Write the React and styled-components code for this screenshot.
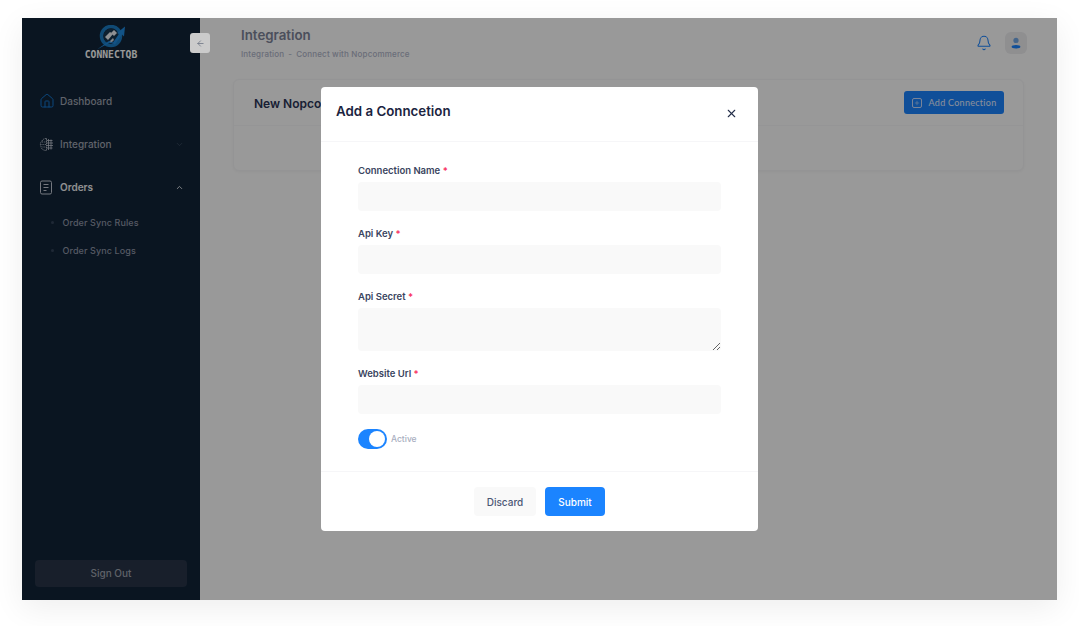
import React from 'react';
import styled, { createGlobalStyle } from 'styled-components';
import { ArrowLeft, Bell, ChevronDown, ChevronUp, Home, Plus, X } from 'lucide-react';

const GlobalStyle = createGlobalStyle`
  html, body {
    margin: 0;
    padding: 0;
    background: #fff;
    font-family: Inter, "Liberation Sans", sans-serif;
  }
  * { box-sizing: border-box; }
`;

const Page = styled.div`
  width: 1079px;
  height: 626px;
  padding: 18px 22px 26px;
`;

const Window = styled.div`
  position: relative;
  display: flex;
  height: 582px;
  background: #fff;
  box-shadow: 0 8px 30px rgba(0, 0, 0, 0.07);
`;

const Sidebar = styled.aside`
  width: 178px;
  flex-shrink: 0;
  display: flex;
  flex-direction: column;
  background: #112438;
  padding: 0 13px 13px;
`;

const Brand = styled.div`
  height: 46px;
  padding-top: 7px;
  display: flex;
  flex-direction: column;
  align-items: center;
  margin-bottom: 27px;
`;

const BrandName = styled.div`
  font-family: "DejaVu Sans Mono", monospace;
  font-size: 9.7px;
  font-weight: 700;
  color: #fff;
  line-height: 10px;
`;

const CollapseButton = styled.button`
  position: absolute;
  z-index: 3;
  left: 168px;
  top: 15px;
  width: 20px;
  height: 20px;
  padding: 0;
  border: 0;
  border-radius: 3px;
  background: #cbcbcb;
  color: #687080;
  display: flex;
  align-items: center;
  justify-content: center;
`;

const NavItem = styled.div`
  display: flex;
  align-items: center;
  height: 20px;
  margin-bottom: ${(p) => p.$gap}px;
  padding-left: 4px;
  font-size: 10px;
  font-weight: ${(p) => (p.$open ? 600 : 500)};
  color: ${(p) => (p.$open ? '#f0f0f2' : '#a0a5b2')};
`;

const NavIcon = styled.span`
  width: 21px;
  display: flex;
  align-items: center;
  color: ${(p) => p.$color};
`;

const NavCaret = styled.span`
  margin-left: auto;
  margin-right: 3px;
  display: flex;
  color: ${(p) => p.$color};
`;

const SubList = styled.div`
  display: flex;
  flex-direction: column;
  gap: 8px;
  margin-top: -5px;
`;

const SubItem = styled.div`
  display: flex;
  align-items: center;
  height: 20px;
  padding-left: 16px;
  font-size: 9px;
  font-weight: 500;
  letter-spacing: 0.1px;
  color: #8f95a6;

  &::before {
    content: '';
    width: 3px;
    height: 3px;
    border-radius: 50%;
    background: #34445a;
    margin-right: 8.5px;
  }
`;

const SignOut = styled.button`
  margin-top: auto;
  height: 27px;
  padding-bottom: 2px;
  border: 0;
  border-radius: 4px;
  background: #283448;
  color: #9ea3ae;
  font-family: inherit;
  font-size: 10px;
  font-weight: 500;
`;

const Main = styled.main`
  flex: 1;
  display: flex;
  flex-direction: column;
  padding: 0 33px;
`;

const TopBar = styled.header`
  height: 61px;
  padding: 9px 8px 0;
  display: flex;
  justify-content: space-between;
`;

const Title = styled.h1`
  margin: 0;
  font-size: 13.3px;
  line-height: 17px;
  font-weight: 600;
  color: #7d8499;
`;

const Breadcrumb = styled.div`
  margin-top: 5px;
  display: flex;
  align-items: center;
  gap: 4px;
  font-size: 8px;
  font-weight: 500;
  letter-spacing: 0.18px;
  color: #b0b6ca;
`;

const TopActions = styled.div`
  display: flex;
  align-items: center;
  height: 32px;
  gap: 13px;
  margin-right: -11px;
`;

const Avatar = styled.div`
  width: 22px;
  height: 22px;
  border-radius: 6px;
  background: #eeeef1;
  display: flex;
  align-items: center;
  justify-content: center;
`;

const Card = styled.section`
  height: 92px;
  border: 1px solid #f7f7f9;
  border-radius: 6px;
  background: #fff;
  box-shadow: 0 1px 3px rgba(0, 0, 0, 0.04);
`;

const CardHead = styled.div`
  height: 46px;
  padding: 11px 19px 0 20px;
  display: flex;
  justify-content: space-between;
  align-items: flex-start;
  border-bottom: 1px solid #f9f9fa;
`;

const CardTitle = styled.div`
  font-size: 12px;
  font-weight: 600;
  color: #2b3558;
  line-height: 25px;
`;

const AddButton = styled.button`
  height: 23px;
  width: 100px;
  border: 0;
  border-radius: 3px;
  background: #1b84ff;
  color: #e8f0ff;
  display: flex;
  align-items: center;
  justify-content: center;
  gap: 7px;
  font-family: Lato, sans-serif;
  font-size: 9px;
  font-weight: 400;
  letter-spacing: 0.28px;
`;

const PlusBox = styled.span`
  width: 10px;
  height: 10px;
  border: 1px solid #c9ddff;
  border-radius: 2px;
  display: flex;
  align-items: center;
  justify-content: center;
`;

const Overlay = styled.div`
  position: absolute;
  inset: 0;
  z-index: 2;
  background: rgba(0, 0, 0, 0.4);
  display: flex;
  align-items: center;
  justify-content: center;
`;

const Modal = styled.div`
  width: 437px;
  height: 444px;
  background: #fff;
  border-radius: 4px;
  display: flex;
  flex-direction: column;
`;

const ModalHead = styled.div`
  height: 55px;
  flex-shrink: 0;
  padding: 16px 20px 0 15px;
  display: flex;
  justify-content: space-between;
  align-items: flex-start;
  border-bottom: 1px solid #f6f6f8;
`;

const ModalTitle = styled.h2`
  margin: 0;
  font-size: 13.3px;
  font-weight: 600;
  line-height: 17px;
  color: #1b2440;
`;

const CloseIcon = styled.span`
  display: flex;
  margin-top: 4px;
  color: #252f4a;
`;

const Form = styled.form`
  flex: 1;
  padding: 21px 37px 0;
  display: flex;
  flex-direction: column;
`;

const Label = styled.label`
  display: block;
  font-size: 9.5px;
  font-weight: 600;
  line-height: 14px;
  padding-top: 1px;
  height: 15px;
  margin-bottom: 4px;
  color: #3a4460;

  &::after {
    content: ' *';
    color: #f8285a;
  }
`;

const Input = styled.div`
  height: 29px;
  border-radius: 4px;
  background: #f9f9f9;
  margin-bottom: 15px;
`;

const TextArea = styled.textarea`
  display: block;
  width: 100%;
  height: 43px;
  border: 0;
  outline: 0;
  border-radius: 4px;
  background: #f9f9f9;
  margin-bottom: 15px;
`;

const SwitchRow = styled.div`
  display: flex;
  align-items: center;
  gap: 4px;
  font-size: 8.5px;
  font-weight: 500;
  color: #a8aec0;
`;

const Switch = styled.span`
  width: 29px;
  height: 20px;
  border-radius: 10px;
  background: #1b84ff;
  display: flex;
  align-items: center;
  justify-content: flex-end;
  padding-right: 2px;

  &::after {
    content: '';
    width: 16px;
    height: 16px;
    border-radius: 50%;
    background: #fff;
  }
`;

const ModalFoot = styled.div`
  height: 60px;
  flex-shrink: 0;
  border-top: 1px solid #f6f6f8;
  display: flex;
  align-items: center;
  justify-content: center;
  gap: 9px;
`;

const FootButton = styled.button`
  height: 29px;
  width: ${(p) => p.$w}px;
  border: 0;
  border-radius: 4px;
  font-family: inherit;
  font-size: 10px;
  font-weight: 500;
  background: ${(p) => (p.$primary ? '#1b84ff' : '#f9f9f9')};
  color: ${(p) => (p.$primary ? '#fff' : '#4b5675')};
`;

function LogoMark() {
  return (
    <svg width="32" height="25" viewBox="0 0 32 25">
      <circle cx="16" cy="11" r="9.5" fill="none" stroke="#1b7cc4" strokeWidth="3.5" />
      <circle cx="16" cy="11" r="7.5" fill="#17354f" />
      <path d="M10 12l5-5 3 2-5 6z" fill="#eef1f5" />
      <path d="M16 8l3-3 3 3-3 3z" fill="#eef1f5" />
      <path d="M14 17l4-4 1 2-3 3z" fill="#cdd4de" />
      <path d="M2 24.5L14 16l4 1.5 6-8.5-2-1 8-6.5-1 10-2-2-7 10-5-2z" fill="#1f8ae0" />
    </svg>
  );
}

function CircuitIcon() {
  return (
    <svg width="15" height="15" viewBox="0 0 15 15" fill="none" stroke="#c4c9d4" strokeWidth="0.8">
      <path d="M7.5 1.5C5 1.5 3.500 2.500 3 4 1.500 5 .8 7.500 2 9.500c0 2.500 2.500 4 5.500 4z" strokeDasharray="1.400 .7" />
      <path d="M7.5 3.500h6M7.500 6h6.500M7.500 8.500h6.500M7.500 11h6M9.500 2v11M12 2.500v10" />
      <path d="M3 5h4.500M2.500 7.500h5M3.500 10h4" strokeDasharray="1 .8" />
    </svg>
  );
}

function OrdersIcon() {
  return (
    <svg width="15" height="15" viewBox="0 0 15 15" fill="none" stroke="#c4c9d4" strokeWidth="1">
      <rect x="1.500" y="1" width="11" height="13" rx="1.500" />
      <path d="M4.500 4.500h5M4.500 7.500h5M4.500 10.500h3" />
    </svg>
  );
}

function UserIcon() {
  return (
    <svg width="12" height="12" viewBox="0 0 12 12">
      <circle cx="6" cy="3.400" r="2.600" fill="#74a9e6" />
      <ellipse cx="6" cy="9.800" rx="4.400" ry="1.700" fill="#1b84ff" />
    </svg>
  );
}

export default function App() {
  return (
    <Page>
      <GlobalStyle />
      <Window>
        <Sidebar>
          <Brand>
            <LogoMark />
            <BrandName>CONNECTQB</BrandName>
          </Brand>
          <NavItem $gap={23}>
            <NavIcon $color="#1477d0"><Home size={16} strokeWidth={1.5} /></NavIcon>
            Dashboard
          </NavItem>
          <NavItem $gap={23}>
            <NavIcon><CircuitIcon /></NavIcon>
            Integration
            <NavCaret $color="#3d4c60"><ChevronDown size={9} /></NavCaret>
          </NavItem>
          <NavItem $gap={20} $open>
            <NavIcon><OrdersIcon /></NavIcon>
            Orders
            <NavCaret $color="#dfe2e8"><ChevronUp size={9} strokeWidth={2.5} /></NavCaret>
          </NavItem>
          <SubList>
            <SubItem>Order Sync Rules</SubItem>
            <SubItem>Order Sync Logs</SubItem>
          </SubList>
          <SignOut>Sign Out</SignOut>
        </Sidebar>
        <CollapseButton><ArrowLeft size={9} /></CollapseButton>
        <Main>
          <TopBar>
            <div>
              <Title>Integration</Title>
              <Breadcrumb>
                <span>Integration</span>
                <span>-</span>
                <span>Connect with Nopcommerce</span>
              </Breadcrumb>
            </div>
            <TopActions>
              <Bell size={16} color="#1b84ff" strokeWidth={1.6} />
              <Avatar><UserIcon /></Avatar>
            </TopActions>
          </TopBar>
          <Card>
            <CardHead>
              <CardTitle>New Nopcommerce Connection</CardTitle>
              <AddButton>
                <PlusBox><Plus size={6} /></PlusBox>
                Add Connection
              </AddButton>
            </CardHead>
          </Card>
        </Main>
        <Overlay>
          <Modal>
            <ModalHead>
              <ModalTitle>Add a Conncetion</ModalTitle>
              <CloseIcon><X size={13} strokeWidth={2} /></CloseIcon>
            </ModalHead>
            <Form>
              <Label>Connection Name</Label>
              <Input />
              <Label>Api Key</Label>
              <Input />
              <Label>Api Secret</Label>
              <TextArea />
              <Label>Website Url</Label>
              <Input />
              <SwitchRow>
                <Switch />
                Active
              </SwitchRow>
            </Form>
            <ModalFoot>
              <FootButton $w={62}>Discard</FootButton>
              <FootButton $w={60} $primary>Submit</FootButton>
            </ModalFoot>
          </Modal>
        </Overlay>
      </Window>
    </Page>
  );
}
